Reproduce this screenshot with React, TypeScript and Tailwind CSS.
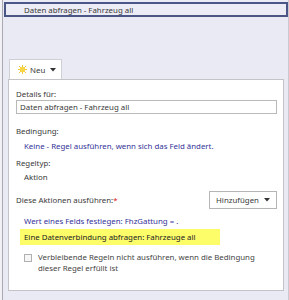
import React from "react";

const font = { fontFamily: '"Noto Sans", "Open Sans", sans-serif' };

const Caret = () => (
  <svg width="6" height="4" viewBox="0 0 6 4" className="ml-[5px]">
    <path d="M0 0 H6 L3 3.5 Z" fill="#333" />
  </svg>
);

const SunIcon = () => (
  <svg width="9" height="9" viewBox="0 0 9 9">
    <rect x="2" y="2" width="5" height="5" fill="#f7d64a" />
    <path
      d="M4.5 0 V2 M4.5 7 V9 M0 4.5 H2 M7 4.5 H9 M1 1 L2.5 2.5 M8 1 L6.5 2.5 M1 8 L2.5 6.5 M8 8 L6.5 6.5"
      stroke="#f2c53a"
      strokeWidth="1"
    />
  </svg>
);

export default function App() {
  return (
    <div
      className="w-[289px] h-[300px] bg-[#eaeaf4] flex text-[7.85px] text-[#3a3a3a] leading-[8px]"
      style={font}
    >
      <div className="w-[2px] bg-[#f2f2f6]" />
      <div className="flex-1 flex flex-col border-l border-[#a9a9b1]">
        {/* titel */}
        <div className="ml-[1px] mt-[2px] h-[15px] border-2 border-[#4a5686] bg-[#ececf6] flex items-center pl-[18px]">
          Daten abfragen - Fahrzeug all
        </div>

        <div className="flex-1 flex flex-col pl-[5px] pr-[4px] pt-[42px] pb-[9px]">
          <div className="ml-[1px] w-[53px] h-[20px] bg-white border border-[#cfcfd6] border-b-0 flex items-center pl-[8px]">
            <SunIcon />
            <span className="ml-[3px]">Neu</span>
            <Caret />
          </div>

          <div className="flex-1 bg-white border border-[#c4c4c8] pl-[7px] pr-[6px] pt-[10px]">
            <div>Details für:</div>
            <div className="mt-[2px] h-[14px] border border-[#b9b9b9] flex items-center pl-[3px]">
              Daten abfragen - Fahrzeug all
            </div>

            <div className="mt-[13px]">Bedingung:</div>
            <div className="mt-[7px] ml-[8px] text-[#333399]">
              Keine - Regel ausführen, wenn sich das Feld ändert.
            </div>

            <div className="mt-[9px]">Regeltyp:</div>
            <div className="mt-[6px] ml-[8px]">Aktion</div>

            <div className="mt-[10px] h-[18px] flex items-center justify-between">
              <div>
                Diese Aktionen ausführen:<span className="text-[#e02020]">*</span>
              </div>
              <div className="w-[68px] h-[18px] border border-[#b5b5b5] flex items-center justify-center">
                Hinzufügen
                <Caret />
              </div>
            </div>

            <div className="mt-[8px] ml-[8px] text-[#333399]">
              Wert eines Felds festlegen: FhzGattung = .
            </div>

            <div className="mt-[4px] ml-[4px] w-[200px] h-[16px] bg-[#fdfd6a] flex items-center pl-[4px] text-[#222]">
              Eine Datenverbindung abfragen: Fahrzeuge all
            </div>

            <div className="mt-[7px] ml-[8px] flex items-start">
              <div className="w-[8px] h-[8px] border border-[#b0b0b0] bg-[#f6f6f6] mt-[2px]" />
              <div className="ml-[6px] leading-[11px] text-[#444]">
                Verbleibende Regeln nicht ausführen, wenn die Bedingung
                <br />
                dieser Regel erfüllt ist
              </div>
            </div>
          </div>
        </div>
      </div>
      <div className="w-[1px] bg-[#c9c9d2]" />
    </div>
  );
}
